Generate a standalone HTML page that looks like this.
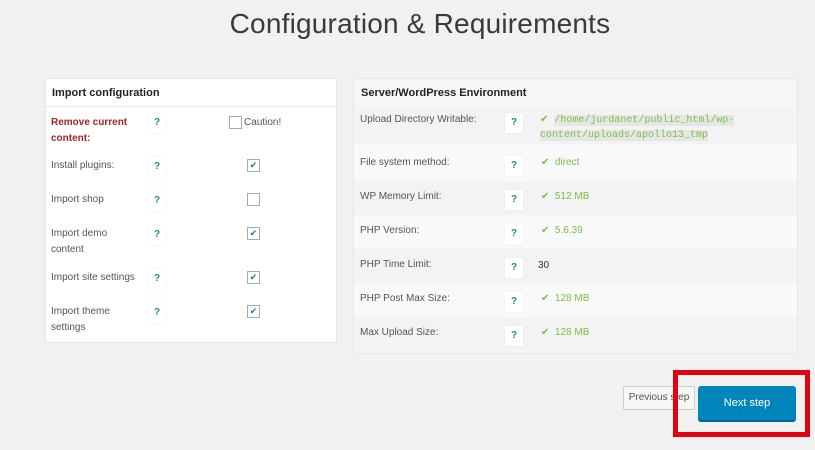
<!DOCTYPE html>
<html><head><style>
body{margin:0;width:815px;height:450px;background:#f1f1f1;font-family:"Liberation Sans",sans-serif;position:relative;overflow:hidden;color:#444}
.a{position:absolute}
h1{position:absolute;left:0;width:840px;text-align:center;top:8px;margin:0;font-weight:normal;font-size:28px;color:#3a3a3a;letter-spacing:0.2px}
.box{position:absolute;background:#fff;border:1px solid #e5e5e5}
.hd{font-weight:bold;font-size:11px;color:#222}
.lbl{font-size:10px;color:#555;line-height:16px}
.q{position:absolute;width:18px;height:20px;background:#fff;box-shadow:0 0 1px #ddd;color:#2a8a6a;font-weight:bold;font-size:10px;text-align:center;line-height:20px}
.cb{position:absolute;width:11px;height:11px;border:1px solid #aaa;background:#fff;font-size:9px;line-height:11px;text-align:center;color:#1e6fa0}
.g{color:#7ac142;font-size:10px}
.row{position:absolute;left:0;width:443px}
</style></head><body>
<h1>Configuration &amp; Requirements</h1>

<div class="box" style="left:45px;top:78px;width:290px;height:263px">
<div class="a hd" style="left:6px;top:8px">Import configuration</div>
<div class="a" style="left:0;top:27px;width:290px;border-top:1px solid #e5e5e5"></div>
</div>
<div class="a lbl" style="left:51px;top:115px;color:#a0262c;font-weight:bold">Remove current<br>content:</div>
<div class="q" style="left:148px;top:113px">?</div>
<div class="cb" style="left:229px;top:116px"></div><div class="a lbl" style="left:244px;top:115px">Caution!</div>
<div class="a lbl" style="left:51px;top:158px">Install plugins:</div><div class="q" style="left:148px;top:157px">?</div><div class="cb" style="left:247px;top:159px">✔</div>
<div class="a lbl" style="left:51px;top:192px">Import shop</div><div class="q" style="left:148px;top:191px">?</div><div class="cb" style="left:247px;top:193px"></div>
<div class="a lbl" style="left:51px;top:226px">Import demo<br>content</div><div class="q" style="left:148px;top:225px">?</div><div class="cb" style="left:247px;top:227px">✔</div>
<div class="a lbl" style="left:51px;top:270px">Import site settings</div><div class="q" style="left:148px;top:269px">?</div><div class="cb" style="left:247px;top:271px">✔</div>
<div class="a lbl" style="left:51px;top:304px">Import theme<br>settings</div><div class="q" style="left:148px;top:303px">?</div><div class="cb" style="left:247px;top:305px">✔</div>

<div class="a" style="left:353px;top:78px;width:443px;height:274px;background:#f6f6f6;border:1px solid #e8e8e8">
<div class="a hd" style="left:7px;top:8px">Server/WordPress Environment</div>
<div class="row" style="top:29px;height:36px;background:#f3f3f3"></div>
<div class="row" style="top:65px;height:37px;background:#f9f9f9"></div>
<div class="row" style="top:102px;height:34px;background:#f3f3f3"></div>
<div class="row" style="top:136px;height:34px;background:#f9f9f9"></div>
<div class="row" style="top:170px;height:34px;background:#f3f3f3"></div>
<div class="row" style="top:204px;height:34px;background:#f9f9f9"></div>
<div class="row" style="top:238px;height:34px;background:#f3f3f3"></div>
</div>
<div class="a lbl" style="left:360px;top:112px">Upload Directory Writable:</div><div class="q" style="left:505px;top:113px">?</div>
<div class="a g" style="left:540px;top:112px;line-height:15px;font-family:'Liberation Mono',monospace;width:200px"><span style="font-family:'Liberation Sans'">✔</span> <span style="background:#e6e6e6">/home/jurdanet/public_html/wp-<br>content/uploads/apollo13_tmp</span></div>
<div class="a lbl" style="left:360px;top:155px">File system method:</div><div class="q" style="left:505px;top:156px">?</div><div class="a g" style="left:541px;top:157px">✔ &nbsp;direct</div>
<div class="a lbl" style="left:360px;top:189px">WP Memory Limit:</div><div class="q" style="left:505px;top:190px">?</div><div class="a g" style="left:541px;top:191px">✔ &nbsp;512 MB</div>
<div class="a lbl" style="left:360px;top:223px">PHP Version:</div><div class="q" style="left:505px;top:224px">?</div><div class="a g" style="left:541px;top:225px">✔ &nbsp;5.6.39</div>
<div class="a lbl" style="left:360px;top:257px">PHP Time Limit:</div><div class="q" style="left:505px;top:258px">?</div><div class="a lbl" style="left:538px;top:258px;color:#333">30</div>
<div class="a lbl" style="left:360px;top:291px">PHP Post Max Size:</div><div class="q" style="left:505px;top:292px">?</div><div class="a g" style="left:541px;top:293px">✔ &nbsp;128 MB</div>
<div class="a lbl" style="left:360px;top:325px">Max Upload Size:</div><div class="q" style="left:505px;top:326px">?</div><div class="a g" style="left:541px;top:327px">✔ &nbsp;128 MB</div>

<div class="a" style="left:623px;top:386px;width:70px;height:22px;background:#f7f7f7;border:1px solid #ccc;border-radius:2px;font-size:10px;color:#555;line-height:22px;text-align:center">Previous step</div>
<div class="a" style="left:673px;top:370px;width:127px;height:57px;border:5px solid #e3000f"></div>
<div class="a" style="left:698px;top:386px;width:98px;height:34px;background:#0085ba;border-bottom:2px solid #006799;border-radius:3px;color:#fff;font-size:11px;line-height:34px;text-align:center">Next step</div>
</body></html>
